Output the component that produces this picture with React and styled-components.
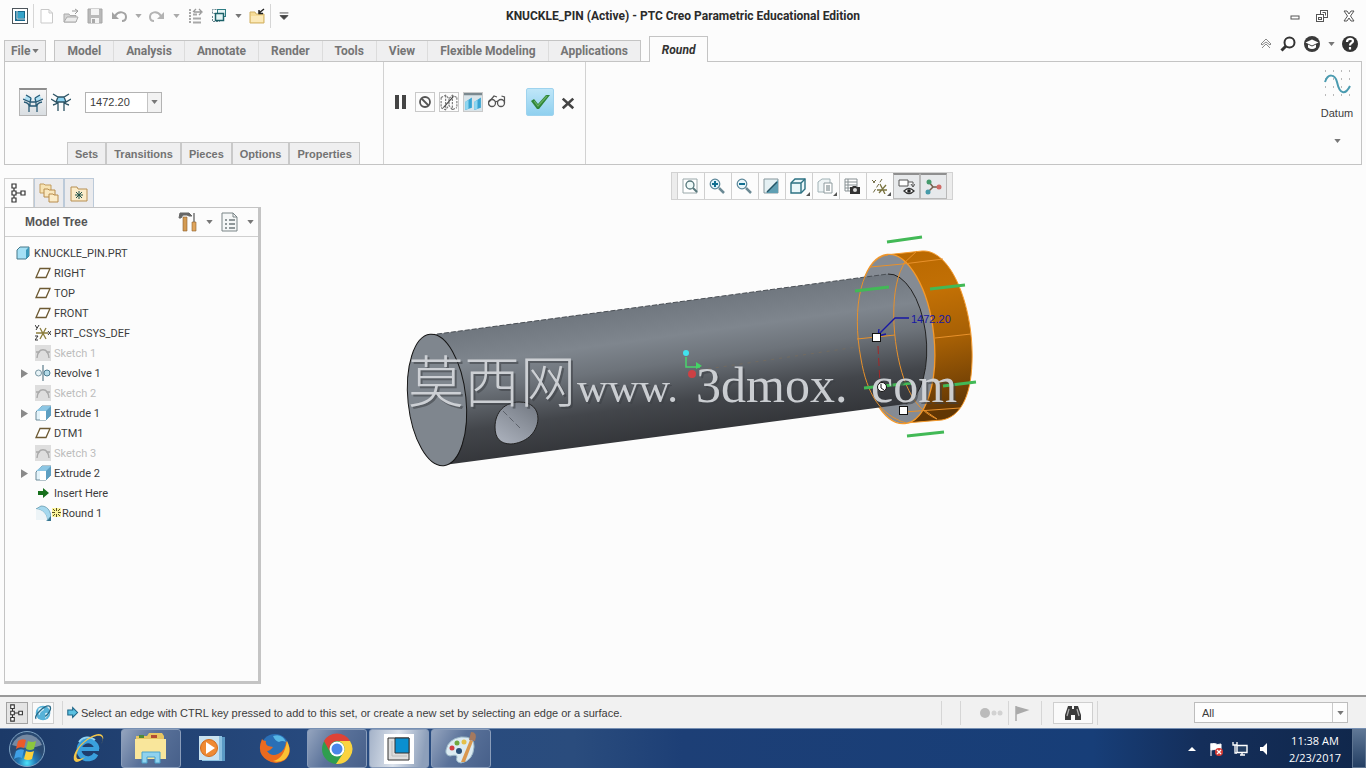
import React from 'react';
import styled, { createGlobalStyle } from 'styled-components';

const GlobalStyle = createGlobalStyle`
  * {
    box-sizing: border-box;
  }
  body {
    margin: 0;
    background: #fcfcfc;
    color: #3c3c3c;
    font-family: "Liberation Sans", Arial, sans-serif;
    font-size: 11px;
  }
  button, input, select {
    font: inherit;
    color: inherit;
    margin: 0;
    padding: 0;
  }
  svg {
    display: block;
    flex: none;
  }
`;

/* ---------- icons ---------- */

const art = {
  app: (
    <>
      <rect x="0.5" y="0.5" width="15" height="15" fill="#fff" stroke="#4d565c" />
      <rect x="3" y="3" width="10" height="10" fill="#17688c" />
      <path d="M5 3v8h8" fill="none" stroke="#cfe3ea" />
      <rect x="6" y="4" width="6" height="6" fill="#35a3c9" />
    </>
  ),
  file: <path d="M2 1.500h8l3.500 3.500v10h-11.500zM10 1.500v3.500h3.500" fill="#fff" stroke="#c9c9c9" />,
  open: (
    <>
      <path d="M1 14V6h5l1 1.500h6V14z" fill="#d5d5d5" stroke="#ababab" />
      <path d="M1 14l3-5h11l-2 5z" fill="#ececec" stroke="#ababab" />
      <path d="M9 3h5M12 1l3 2-3 3" fill="none" stroke="#999" />
    </>
  ),
  save: (
    <>
      <path d="M1 1h14v14H1z" fill="#b9b9b9" stroke="#a6a6a6" />
      <path d="M4 1h8v6H4zM4 10h8v5H4z" fill="#f3f3f3" />
      <path d="M5 11h3v4H5z" fill="#a9a9a9" />
    </>
  ),
  undo: (
    <>
      <path d="M4 8c4-6 11-4 11 1 0 3-2 4-4 4" fill="none" stroke="#a3a3a3" strokeWidth="2" />
      <path d="M1 4v7h7z" fill="#a3a3a3" />
    </>
  ),
  redo: (
    <>
      <path d="M12 8C8 2 1 4 1 9c0 3 2 4 4 4" fill="none" stroke="#b3b3b3" strokeWidth="2" />
      <path d="M15 4v7H8z" fill="#b3b3b3" />
    </>
  ),
  regen: (
    <>
      <path d="M3 1v14" stroke="#a8a8a8" strokeWidth="2" strokeDasharray="2 1" />
      <path d="M6 6.500h4M6 10.500h8M6 14.500h8" stroke="#a8a8a8" strokeWidth="2" />
      <path d="M7 4h7M9 1L6 4M12 1l3 3-3 3" fill="none" stroke="#9a9a9a" strokeWidth="1.300" />
    </>
  ),
  windows: (
    <>
      <path d="M5.500 1.500h-4v4h3M1.500 8v5.500h7v-1" fill="none" stroke="#6b8790" strokeDasharray="2 1" />
      <rect x="6.500" y="1.500" width="8" height="7" fill="#e6f4f4" stroke="#2e7d84" />
      <rect x="4.500" y="5.500" width="8" height="7" fill="#e3f5f5" stroke="#1b6168" strokeWidth="1.500" />
    </>
  ),
  closeFolder: (
    <>
      <path d="M1 4h5l1 2h8v9H1z" fill="#f6dc98" stroke="#d0b064" />
      <path d="M2 8h12v6H2z" fill="#fbe9b8" />
      <path d="M15 1l-5 4M10 2v3.500h4" fill="none" stroke="#222" strokeWidth="1.500" />
    </>
  ),
  customize: <path d="M3 4.500h10M3.500 7.500h9L8 12z" fill="#444" stroke="#444" />,
  minimize: <rect x="4" y="8" width="8" height="3" fill="#fff" stroke="#555" />,
  restore: (
    <>
      <rect x="6.500" y="2.500" width="7" height="7" fill="#fff" stroke="#555" />
      <rect x="2.500" y="6.500" width="7" height="7" fill="#fff" stroke="#555" />
      <rect x="4.500" y="9.500" width="3" height="2" fill="#fff" stroke="#555" />
      <path d="M8.500 4.500h3v3" fill="none" stroke="#555" />
    </>
  ),
  close: (
    <path d="M3 3h3l2 3 2-3h3L9.500 8 13 13h-3l-2-3-2 3H3l3.500-5z" fill="#fff" stroke="#555" />
  ),
  collapse: <path d="M3 8l5-5 5 5-1 1-4-3-4 3zM4 12l4-4 4 4" fill="#fff" stroke="#8a8a8a" />,
  search: (
    <>
      <circle cx="9.500" cy="6.500" r="5" fill="#fff" stroke="#333" strokeWidth="2" />
      <path d="M6 10l-4.500 4.500" stroke="#333" strokeWidth="3" />
    </>
  ),
  learn: (
    <>
      <circle cx="8" cy="8" r="8" fill="#3a3a3a" />
      <path d="M1.500 6.500L8 3.500l6.500 3L8 9.500zM4 8.500v3q4 3 8 0v-3L8 10.500z" fill="#fff" />
    </>
  ),
  help: (
    <>
      <circle cx="8" cy="8" r="8" fill="#333" />
      <path d="M5 6c0-4 6-4 6-1 0 2-3 2-3 4.500M8 11v2.500" fill="none" stroke="#fff" strokeWidth="2.200" />
    </>
  ),
  roundSet: (
    <>
      <path d="M1 6l3-4 5 3-1 4zM19 6l-3-4-5 3 1 4z" fill="#aee0f4" />
      <path d="M3 2l5 3M17 2l-5 3M0 6l7 3h6l7-3M1 9q5 1 5 4v6M19 9q-5 1-5 4v6M6 13h8M8 5l-1 4v4M12 5l1 4v4" fill="none" stroke="#285a75" strokeWidth="1.300" />
    </>
  ),
  roundTrans: (
    <>
      <path d="M7 5h6l2 5H5z" fill="#8dd4f2" />
      <path d="M2 2l5 3h6l5-3M0 7l5 3h10l5-3M2 13q4-1 5-3M18 13q-4-1-5-3M7 5l-2 5M13 5l2 5M7 10v9M13 10v9" fill="none" stroke="#2c5364" strokeWidth="1.300" />
    </>
  ),
  pause: <path d="M2 1h4v14H2zM9 1h4v14H9z" fill="#444" />,
  none: (
    <>
      <circle cx="8" cy="8" r="5" fill="none" stroke="#555" strokeWidth="1.800" />
      <path d="M4.500 4.500l7 7" stroke="#555" strokeWidth="1.800" />
    </>
  ),
  unattached: (
    <>
      <path d="M1 4l4-2 3 3 3-3 4 2M1 13l4 2 3-4 3 4 4-2M1 4v9M8 5v6M15 4v9M5 2v13M11 2v13" fill="none" stroke="#777" strokeDasharray="2 1" />
      <path d="M3 13L12 3" stroke="#444" />
    </>
  ),
  attached: (
    <>
      <path d="M0 0h16v16H0z" fill="#d9e4e9" />
      <path d="M1 8l6-4v9l-6 2zM9 8l6-4v9l-6 2z" fill="#38a4d2" />
      <path d="M1 8l3-2v8l-3 1zM9 8l3-2v8l-3 1z" fill="#8fd6f0" />
      <path d="M0 0h16v2H0z" fill="#7b898f" />
    </>
  ),
  glasses: (
    <>
      <ellipse cx="4" cy="10" rx="3.500" ry="3.500" fill="none" stroke="#555" strokeWidth="1.300" />
      <ellipse cx="13" cy="10" rx="3.500" ry="3.500" fill="none" stroke="#555" strokeWidth="1.300" />
      <path d="M1 9l5-6 3 1M16.500 10V4l-3-1M7 9l3-1" fill="none" stroke="#555" strokeWidth="1.200" />
    </>
  ),
  check: (
    <>
      <path d="M1 9l3-2 4 5 8-9h4L9 17H7z" fill="#2e8539" />
      <path d="M4 9l4 5 9-10" fill="none" stroke="#66ae62" strokeWidth="1.200" />
    </>
  ),
  cancel: <path d="M2 3l12 11M14 3L2 14" stroke="#444" strokeWidth="3" />,
  datum: (
    <>
      <path d="M3 2h1M11 2h1M19 2h1M27 2h1M3 10h1M11 10h1M19 10h1M27 10h1M3 18h1M11 18h1M19 18h1M27 18h1M3 26h1M11 26h1M19 26h1M27 26h1" stroke="#777" />
      <path d="M3 13C6 4 13 5 15 13C18 27 24 25 28 17" fill="none" stroke="#4a9bb0" strokeWidth="2" />
    </>
  ),
  tree: (
    <path d="M3 1h4v4H3zM3 8h4v4H3zM3 15h4v4H3zM12 8h4v4h-4zM5 5v3M5 12v3M7 10h5" fill="#fff" stroke="#333" strokeWidth="1.200" />
  ),
  folders: (
    <>
      <path d="M1 1h4l1 1h6v8H1z" fill="#f7e3b3" stroke="#c39d5e" />
      <path d="M5 6h4l1 1h6v7H5z" fill="#f9e8c0" stroke="#b88c4c" />
      <path d="M10 11h4l1 1h4v7h-9z" fill="#fbecc9" stroke="#b88c4c" />
    </>
  ),
  favorites: (
    <>
      <path d="M1 3h6l1 2h9v12H1z" fill="#fbecca" stroke="#b78f52" />
      <path d="M9 7v8M5 11h8M6 8l6 6M12 8l-6 6" stroke="#21534a" />
    </>
  ),
  settings: (
    <>
      <path d="M2 1h9l3 3h-3L9 3H5L3 6H1z" fill="#666" stroke="#666" />
      <path d="M5 5h4v14H5z" fill="#d49b52" stroke="#8a5f2c" strokeWidth="0.600" />
      <path d="M16 1v10" stroke="#777" strokeWidth="1.500" />
      <path d="M14 10h4v9h-4z" fill="#e0a55c" stroke="#8a5f2c" strokeWidth="0.600" />
    </>
  ),
  show: (
    <>
      <path d="M2 1h11l4 4v14H2z" fill="#f5f7f7" stroke="#7b8587" />
      <path d="M13 1v4h4" fill="none" stroke="#7b8587" />
      <path d="M5 8h2M5 12h2M5 16h2M9 8h6M9 12h6M9 16h6" stroke="#6f7a7c" strokeWidth="1.400" />
    </>
  ),
  part: (
    <>
      <path d="M2 5l3-3h9v9l-3 3H2z" fill="#a5e0f5" stroke="#46798a" strokeLinejoin="round" />
      <path d="M11 5l3-3v9l-3 3z" fill="#3d9abb" />
    </>
  ),
  plane: <path d="M5 3.500h10l-4 9H1z" fill="#fff" stroke="#6d5a33" strokeWidth="1.300" />,
  csys: (
    <>
      <path d="M1 8h12M5 3l6 11M11 3L5 14" stroke="#8a7c3c" strokeWidth="1.300" />
      <path d="M0 0l2 3M4 0L1 5M0 11h3l-3 4h3M13 6l3 4M16 6l-3 4" fill="none" stroke="#333" />
    </>
  ),
  sketch: (
    <>
      <path d="M0 0h16v16H0z" fill="#dedede" />
      <path d="M2 13c1-11 11-11 12 0M1 7h4M11 7h4" fill="none" stroke="#aaa" strokeWidth="1.400" />
    </>
  ),
  revolve: (
    <>
      <circle cx="3.500" cy="8" r="3" fill="#e7f3f7" stroke="#7896a2" />
      <circle cx="12" cy="8" r="3" fill="#b4dbe9" stroke="#4c7c90" />
      <path d="M8 0v16" stroke="#3b6374" />
    </>
  ),
  extrude: (
    <>
      <path d="M1 7l6-6h9v9l-5 5H1z" fill="#e3f3fa" stroke="#6b8998" />
      <path d="M7 1h9v9l-5 5V6H1z" fill="#8cc6e4" />
      <path d="M5 6h6v9H5z" fill="#fff" />
      <path d="M11 6l5-5v9l-5 5z" fill="#5e9fc2" />
    </>
  ),
  insert: <path d="M3 6h5V3l6 5-6 5v-3H3z" fill="#17701c" />,
  round: (
    <>
      <path d="M1 4l5-3c6 0 9 4 10 10l-4 5C12 9 8 5 1 4z" fill="#a5d8ee" stroke="#6699ad" strokeWidth="0.800" />
      <path d="M1 4v11h11C12 9 8 5 1 4z" fill="#edf4f7" />
      <path d="M12 16l4-5v5z" fill="#34748f" />
    </>
  ),
  refit: (
    <>
      <path d="M1 1h14v14H1z" fill="#fff" stroke="#9aa8aa" />
      <circle cx="8" cy="7" r="4" fill="#eef9f8" stroke="#56777b" strokeWidth="1.300" />
      <path d="M11 10l4 4" stroke="#56777b" strokeWidth="2" />
    </>
  ),
  zoomIn: (
    <>
      <circle cx="6" cy="6" r="4.800" fill="#e0f4fb" stroke="#5b8698" strokeWidth="1.200" />
      <path d="M3 6h6M6 3v6" stroke="#116f91" strokeWidth="2" />
      <path d="M10 10l5 5" stroke="#6a8994" strokeWidth="2.500" />
    </>
  ),
  zoomOut: (
    <>
      <circle cx="6" cy="6" r="4.800" fill="#e9f6fa" stroke="#5b8698" strokeWidth="1.200" />
      <path d="M3 6h6" stroke="#116f91" strokeWidth="2" />
      <path d="M10 10l5 5" stroke="#6a8994" strokeWidth="2.500" />
    </>
  ),
  repaint: (
    <>
      <path d="M1 1h14v14H1z" fill="#e4f0f3" stroke="#86979d" />
      <path d="M15 2v13H3z" fill="#5f9fb3" />
      <path d="M4 14l10-10" stroke="#245465" strokeWidth="1.500" />
    </>
  ),
  display: (
    <>
      <path d="M1 5l4-4h10v10l-4 4H1z" fill="#eaf7fa" stroke="#2c7182" strokeWidth="1.400" />
      <path d="M1 5h10v10M11 5l4-4" fill="none" stroke="#2c7182" strokeWidth="1.400" />
    </>
  ),
  views: (
    <>
      <path d="M1 4l4-3h8v9l-3 4H1z" fill="#eef4f5" stroke="#a1b2b6" />
      <path d="M7 5h8v10H7z" fill="#fff" stroke="#8e9b9e" />
      <path d="M9 8h4M9 10h4M9 12h4" stroke="#67787c" />
    </>
  ),
  viewManager: (
    <>
      <path d="M1 1h12v12H1zM4 1v12M1 4h12M1 7h12M1 10h12" fill="#fff" stroke="#879093" />
      <path d="M6 9h2l1-1h3l1 1h3v7H6z" fill="#333" />
      <circle cx="11" cy="12" r="2" fill="#ddd" />
    </>
  ),
  datums: (
    <>
      <path d="M1 2l4 4M5 2L1 6M11 1L2 15" fill="none" stroke="#6e6840" strokeDasharray="4 2" />
      <path d="M6 12h10M9 6l5 10M15 7L8 15" stroke="#79733f" strokeWidth="1.300" />
    </>
  ),
  annotations: (
    <>
      <path d="M1 1h9v6H1zM10 3h5v4M13 5l2 3 2-3" fill="#fff" stroke="#555" />
      <path d="M6 12q5-5 10 0q-5 5-10 0z" fill="#fff" stroke="#333" strokeWidth="1.300" />
      <circle cx="11" cy="12" r="1.800" fill="#222" />
    </>
  ),
  spin: (
    <>
      <path d="M4 3l4 5-5 5M8 8h6" fill="none" stroke="#76604e" strokeWidth="1.500" />
      <circle cx="4" cy="3" r="2.500" fill="#459a6c" />
      <circle cx="3" cy="13" r="2.500" fill="#479baa" />
      <circle cx="14" cy="8" r="2.500" fill="#cf6b66" />
    </>
  ),
  globe: (
    <>
      <circle cx="8" cy="8" r="6.500" fill="#57b2d8" />
      <path d="M4 4q4-2 5 1q-4 2-4 5q-2-1-1-6M10 8q3-1 3 1l-3 4z" fill="#d7f0f8" />
      <path d="M2 13C-1 11 10 0 14 2c2 2-1 7-4 9" fill="none" stroke="#286a88" strokeWidth="1.200" />
    </>
  ),
  message: <path d="M1 5h6V2l6 6-6 6v-3H1z" fill="#5bc1e1" stroke="#1c6487" strokeWidth="1.300" />,
  flag: <path d="M2 1v15M2 2l11 3-11 4z" fill="#aaa" stroke="#aaa" strokeWidth="1.500" />,
  binoculars: (
    <>
      <path d="M3 1h4v3h2V1h4l3 9v5h-6v-5H6v5H0v-5z" fill="#3b3b3b" />
      <path d="M4 4l-2 7M12 4l2 7" stroke="#aaa" strokeWidth="1.300" />
    </>
  ),
  status: (
    <>
      <circle cx="6" cy="8" r="5" fill="#bbb" />
      <circle cx="15" cy="8" r="2.500" fill="#d2d2d2" />
      <circle cx="21" cy="8" r="2.500" fill="#d2d2d2" />
    </>
  ),
  start: (
    <>
      <defs>
        <radialGradient id="orb" cx="0.5" cy="0.9">
          <stop offset="0" stopColor="#4de3fb" />
          <stop offset="0.5" stopColor="#2379b5" />
          <stop offset="1" stopColor="#2a4a72" />
        </radialGradient>
      </defs>
      <circle cx="18" cy="18" r="17.500" fill="url(#orb)" stroke="#7fa3c4" />
      <path d="M3 14a16 16 0 0 1 30 0q-14 6-30 0z" fill="#fff" opacity="0.350" />
      <path d="M9 10q4-3 8-1l-2 8q-4-2-8 1z" fill="#ec5a2a" />
      <path d="M19 10q4 2 8 0l-2 8q-4 2-8 0z" fill="#8cc63e" />
      <path d="M7 20q4-3 8-1l-2 8q-4-2-8 1z" fill="#3fa0e6" />
      <path d="M17 20q4 2 8 0l-2 8q-4 2-8 0z" fill="#fdd13a" />
    </>
  ),
  ie: (
    <>
      <path d="M26 18A9 9 0 1 0 25 23" fill="none" stroke="#3aa0dd" strokeWidth="5" />
      <path d="M10 18h18" stroke="#3aa0dd" strokeWidth="4" />
      <path d="M8 11A11 11 0 0 1 24 9" fill="none" stroke="#8fd4f5" strokeWidth="2" />
      <path d="M31 4c-7-6-31 14-28 25 2 4 7 1 11-3-7 4-10 2-8-4C9 12 26 1 31 6q2 3-1 7 4-6 1-9z" fill="#f2c64a" />
    </>
  ),
  explorer: (
    <>
      <path d="M3 5h11l2-3h13l2 3v20H3z" fill="#e8c662" />
      <path d="M6 4h5v3H6z" fill="#4d8a3b" />
      <path d="M18 4h6v3h-6z" fill="#b34d34" />
      <path d="M2 8h31v20H2z" fill="#f9e69b" />
      <path d="M9 21h18v11h-5v-6h-8v6H9z" fill="#8fd2ee" stroke="#4ba3cc" />
    </>
  ),
  media: (
    <>
      <path d="M10 6h20v24H10z" fill="#5b9ac5" />
      <path d="M7 5h20v25H7z" fill="#8bc0e0" />
      <path d="M4 5h20v24H4z" fill="#c9e2f0" />
      <circle cx="14" cy="17" r="8.500" fill="#ef8a33" stroke="#d26b1c" />
      <path d="M11 11l9 6-9 6z" fill="#fff" />
    </>
  ),
  firefox: (
    <>
      <circle cx="18" cy="17" r="14" fill="#2a6fb6" />
      <path d="M16 5q9-3 13 6-4-2-7 0-4-1-6-6z" fill="#57b7e5" />
      <path d="M5 8q1 2 4 2-1 3 2 5l5 1q-3 4-6 4 4 6 11 3 8-4 8-13 8 10-1 19-9 6-18 0Q-1 22 5 8z" fill="#ea6a1f" />
      <path d="M30 10q6 12-3 19-6 3-11 1 11-2 14-20z" fill="#fbc235" />
    </>
  ),
  chrome: (
    <>
      <circle cx="18" cy="18" r="15" fill="#2f9e4f" />
      <path d="M5 10A15 15 0 0 1 31 10H18a8 8 0 0 0-7 11z" fill="#de4336" />
      <path d="M31 10a15 15 0 0 1-14 23l8-12a8 8 0 0 0-7-11z" fill="#fbd33f" />
      <circle cx="18" cy="18" r="7.500" fill="#fff" />
      <circle cx="18" cy="18" r="5.500" fill="#4a86e8" />
    </>
  ),
  creo: (
    <>
      <path d="M3 3h30v30H3z" fill="#fff" />
      <path d="M7 7h21v22H7z" fill="#ddd" stroke="#333" />
      <path d="M14 7h14v15H14z" fill="#0a8fd0" stroke="#333" />
      <path d="M11 10v15h15" fill="none" stroke="#bbb" />
    </>
  ),
  paint: (
    <>
      <path d="M18 6q14-1 13 10-1 14-13 16-6-1-4-6 0-3-7-1-5-1-4-6Q5 8 18 6z" fill="#dcebf2" stroke="#9db9c8" />
      <circle cx="9" cy="17" r="2.500" fill="#d43f44" />
      <circle cx="14" cy="12" r="2.500" fill="#73a83e" />
      <circle cx="21" cy="11" r="2.500" fill="#e5c049" />
      <circle cx="16" cy="20" r="3" fill="#294f78" />
      <path d="M18 31l9-22 3 1-8 21z" fill="#d9974e" />
      <path d="M26 9l2-8q7 0 4 9z" fill="#a5795f" />
    </>
  ),
  trayUp: <path d="M4 10l4-4 4 4z" fill="#fff" />,
  trayFlag: (
    <>
      <path d="M3 2v13M3 3q4-1 5 0t5 0v6q-4 1-5 0t-5 0z" fill="#fff" stroke="#fff" />
      <circle cx="11" cy="11" r="4" fill="#d53a34" />
      <path d="M9 9l4 4M13 9l-4 4" stroke="#fff" strokeWidth="1.300" />
    </>
  ),
  network: (
    <>
      <path d="M5 4.500h10v7H5zM8 14h5M10 12v2" fill="#243f63" stroke="#fff" strokeWidth="1.400" />
      <path d="M1 1v3h4V1M3 4v8h2" fill="none" stroke="#fff" strokeWidth="1.300" />
    </>
  ),
  volume: <path d="M4 6h3l4-4v12l-4-4H4z" fill="#fff" />,
};

function Icon({ name, size = 16, width = size, box = size, boxWidth = box }) {
  return (
    <svg width={width} height={size} viewBox={`0 0 ${boxWidth} ${box}`} aria-hidden="true">
      {art[name]}
    </svg>
  );
}

function Arrow({ color = '#777' }) {
  return (
    <svg width="7" height="4" viewBox="0 0 8 5" aria-hidden="true">
      <path d="M0 0h8L4 5z" fill={color} />
    </svg>
  );
}

/* ---------- window frame ---------- */

const Window = styled.div`
  display: flex;
  flex-direction: column;
  min-height: 100vh;
`;

const TitleBar = styled.header`
  display: grid;
  grid-template-columns: 1fr auto 1fr;
  align-items: center;
  height: 32px;
`;

const QuickAccess = styled.div`
  display: flex;
  align-items: center;
  padding-left: 8px;
`;

const PlainButton = styled.button`
  display: flex;
  align-items: center;
  justify-content: center;
  width: ${(p) => p.$w || 24}px;
  height: ${(p) => p.$h || 24}px;
  border: 0;
  background: transparent;
`;

const Divider = styled.span`
  width: 1px;
  height: ${(p) => p.$h || 24}px;
  margin: 0 ${(p) => p.$gap || 0}px;
  background: #d6d6d6;
`;

const Title = styled.h1`
  margin: 0;
  font-family: Roboto, "Liberation Sans", sans-serif;
  font-size: 12px;
  line-height: 16px;
  font-weight: 700;
  color: #2b2b2b;
`;

const WindowControls = styled.div`
  display: flex;
  justify-content: flex-end;
  gap: 3px;
  padding-right: 5px;
`;

const TabRow = styled.nav`
  display: flex;
  align-items: flex-end;
  height: 29px;
  padding-left: 4px;
`;

const TabGroup = styled.div`
  display: flex;
  margin: 0 8px;
  border: 1px solid #c4c4c4;
  border-bottom: 0;
`;

const Tab = styled.button`
  display: flex;
  align-items: center;
  gap: 2px;
  height: 20px;
  padding: 0 12px;
  border: 0;
  border-right: 1px solid #dcdcdc;
  background: #efeff0;
  color: #757575;
  font-family: Roboto, "Liberation Sans", sans-serif;
  font-size: 12px;
  font-weight: 700;
  &:last-child {
    border-right: 0;
  }
`;

const FileTab = styled(Tab)`
  height: 21px;
  padding: 0 6px;
  border: 1px solid #c4c4c4 !important;
  border-bottom: 0 !important;
`;

const ActiveTab = styled(Tab)`
  position: relative;
  height: 26px;
  margin-bottom: -1px;
  border: 1px solid #c4c4c4 !important;
  border-bottom: 0 !important;
  background: #fcfcfc;
  color: #333;
  font-style: italic;
`;

const HelpTools = styled.div`
  display: flex;
  align-items: center;
  align-self: flex-start;
  margin-left: auto;
  padding-right: 4px;
`;

/* ---------- ribbon ---------- */

const Ribbon = styled.section`
  display: flex;
  height: 104px;
  margin: 0 4px;
  border: 1px solid #c4c4c4;
`;

const Dashboard = styled.div`
  display: flex;
  flex-direction: column;
  justify-content: space-between;
  width: 379px;
  padding: 26px 0 0 14px;
  border-right: 1px solid #d2d2d2;
`;

const Row = styled.div`
  display: flex;
  align-items: center;
`;

const ToolButton = styled(PlainButton)`
  width: 28px;
  height: 28px;
  border: ${(p) => (p.$on ? '1px solid #b5b5b5' : '0')};
  border-top: ${(p) => (p.$on ? '2px solid #8e8e8e' : '0')};
  background: ${(p) => (p.$on ? 'linear-gradient(#f7f7f7, #d9dee2)' : 'transparent')};
`;

const RadiusBox = styled.div`
  display: flex;
  height: 21px;
  margin-left: 10px;
  border: 1px solid #b3b3b3;
`;

const RadiusInput = styled.input`
  width: 61px;
  padding-left: 4px;
  border: 0;
  background: #fff;
`;

const RadiusArrow = styled(PlainButton)`
  width: 14px;
  height: 19px;
  border-left: 1px solid #c4c4c4;
  background: #f2f2f2;
`;

const PanelTabs = styled.div`
  display: flex;
  padding-left: 48px;
`;

const PanelTab = styled.button`
  height: 22px;
  padding: 0 7px;
  border: 1px solid #c9c9c9;
  border-bottom: 0;
  background: #efeff0;
  color: #737373;
  font-weight: 700;
`;

const Controls = styled.div`
  display: flex;
  align-items: flex-start;
  width: 202px;
  padding: 26px 0 0 7px;
  border-right: 1px solid #d2d2d2;
`;

const PreviewButton = styled(PlainButton)`
  width: 20px;
  height: 20px;
  margin: 4px 4px 0 0;
  border: 1px solid ${(p) => (p.$framed ? '#c9c9c9' : 'transparent')};
`;

const OkButton = styled(PlainButton)`
  width: 28px;
  height: 28px;
  margin-left: 15px;
  border: 1px solid #9ed3ee;
  border-radius: 2px;
  background: linear-gradient(#bfe6f8, #8fd0ef);
`;

const DatumButton = styled.button`
  display: flex;
  flex-direction: column;
  align-items: center;
  align-self: flex-start;
  width: 48px;
  margin-left: auto;
  padding-top: 7px;
  border: 0;
  background: transparent;
  line-height: 14px;
`;

const DatumLabel = styled.span`
  margin: 9px 0 19px;
`;

/* ---------- work area ---------- */

const Work = styled.main`
  display: flex;
  flex: 1;
  min-height: 0;
`;

const Sidebar = styled.aside`
  display: flex;
  flex-direction: column;
  width: 261px;
  padding: 13px 0 11px 4px;
`;

const SideTabs = styled.div`
  display: flex;
`;

const SideTab = styled.button`
  display: flex;
  align-items: center;
  justify-content: center;
  width: 30px;
  height: 29px;
  border: 1px solid ${(p) => (p.$active ? '#d2d2d2' : '#bccad9')};
  border-bottom: 0;
  background: ${(p) => (p.$active ? '#fcfcfc' : '#ebebed')};
`;

const TreePanel = styled.div`
  flex: 1;
  border: 1px solid #c4c4c4;
  border-width: 1px 3px 3px 1px;
`;

const TreeHeader = styled.div`
  display: flex;
  align-items: center;
  height: 29px;
  padding-left: 20px;
  border-bottom: 1px solid #cfcfcf;
`;

const TreeTitle = styled.h2`
  flex: 1;
  margin: 0;
  font-size: 12px;
  color: #555;
`;

const TreeList = styled.ul`
  margin: 0;
  padding: 6px 0 0;
  list-style: none;
`;

const TreeItem = styled.li`
  display: flex;
  align-items: center;
  gap: ${(p) => (p.$tight ? 1 : 3)}px;
  height: 20px;
  padding-left: ${(p) => (p.$root ? 10 : 30)}px;
  color: ${(p) => (p.$dim ? '#bcbcbc' : '#3c3c3c')};
  font-family: Roboto, "Liberation Sans", sans-serif;
`;

const Expander = styled.button`
  width: 20px;
  height: 20px;
  margin-left: -20px;
  margin-right: -3px;
  padding-left: 6px;
  border: 0;
  background: transparent;
`;

const Viewport = styled.section`
  display: flex;
  flex: 1;
  flex-direction: column;
  align-items: center;
  min-width: 0;
  padding-top: 7px;
`;

const ViewTools = styled.div`
  display: flex;
  height: 28px;
  margin-right: 4px;
  padding: 0 5px;
  border: 1px solid #d2d2d2;
  background: #ececec;
`;

const ViewTool = styled.button`
  display: flex;
  align-items: center;
  justify-content: center;
  width: 27px;
  height: 26px;
  border: 0;
  border-left: 1px solid #cfcfcf;
  background: #fcfcfc;
  ${(p) => p.$on && 'border: 1px solid #b9b9b9; border-top: 2px solid #8f8f8f; background: #e7e9eb;'}
`;

const Corner = styled.span`
  align-self: flex-end;
  margin: 0 -2px 3px -1px;
  border: 2px solid transparent;
  border-right-color: #555;
  border-bottom-color: #555;
`;

const Canvas = styled.svg`
  flex: 1 1 0;
  width: 100%;
  min-height: 0;
`;

const Watermark = styled.g`
  fill: #d2d5d9;
  font-family: "Liberation Serif", "Noto Sans CJK SC", serif;
  font-weight: 300;
  opacity: 0.95;
  filter: drop-shadow(2px 2px 0 rgba(60, 64, 69, 0.6));
`;

/* ---------- status bar ---------- */

const StatusBar = styled.footer`
  display: flex;
  align-items: center;
  height: 33px;
  padding: 0 18px 0 6px;
  border-top: 2px solid #999;
  background: #f1f1f1;
`;

const StatusButton = styled(PlainButton)`
  width: ${(p) => p.$w || 22}px;
  height: 22px;
  margin-right: 4px;
  border: 1px solid ${(p) => (p.$on ? '#a2a2a2' : '#cfcfcf')};
  background: ${(p) => (p.$on ? '#e4e4e4' : '#fafafa')};
`;

const Message = styled.p`
  flex: 1;
  margin: 0 0 0 1px;
  line-height: 16px;
`;

const Filter = styled.label`
  display: grid;
  align-items: center;
  justify-items: end;
  width: 154px;
  height: 21px;
  margin-left: 96px;
`;

const FilterSelect = styled.select`
  grid-area: 1 / 1;
  appearance: none;
  width: 100%;
  height: 100%;
  padding-left: 7px;
  border: 1px solid #bdbdbd;
  border-radius: 0;
  background: #fdfdfd;
`;

const FilterArrow = styled.span`
  grid-area: 1 / 1;
  display: flex;
  align-items: center;
  justify-content: center;
  width: 15px;
  height: 19px;
  margin-right: 1px;
  border-left: 1px solid #c9c9c9;
  pointer-events: none;
`;

/* ---------- task bar ---------- */

const TaskBar = styled.nav`
  display: flex;
  align-items: center;
  height: 40px;
  border-top: 1px solid #7790b3;
  background: linear-gradient(90deg, #1c3a68, #284b80 25%, #2a4c7d 42%, #1d3f76 50%, #173e78 80%, #142e5a 88%, #10274b);
  color: #fff;
`;

const StartButton = styled(PlainButton)`
  width: 54px;
  height: 39px;
  margin-right: 5px;
`;

const Task = styled.button`
  display: flex;
  align-items: center;
  justify-content: center;
  width: 60px;
  height: 39px;
  margin-right: 2px;
  border: 1px solid ${(p) => (p.$open ? '#8a9dba' : 'transparent')};
  border-radius: 3px;
  background: ${(p) =>
    p.$front
      ? 'linear-gradient(100deg, #a5b3c9, #dce3ec 45%, #8d9fba 90%)'
      : p.$open
        ? 'linear-gradient(120deg, #94a4be, #5a729a 45%, #47608a)'
        : 'transparent'};
`;

const Tray = styled.div`
  display: flex;
  align-items: center;
  gap: 8px;
  margin-left: auto;
`;

const Clock = styled.time`
  width: 58px;
  margin-left: 6px;
  font-family: "Open Sans", "Noto Sans", sans-serif;
  font-size: 11px;
  line-height: 17px;
  text-align: center;
`;

const ShowDesktop = styled.button`
  width: 14px;
  height: 39px;
  border: 1px solid #5f7591;
  background: linear-gradient(#5e7695, #243f63);
`;

const tabs = ['Model', 'Analysis', 'Annotate', 'Render', 'Tools', 'View', 'Flexible Modeling', 'Applications'];
const panels = ['Sets', 'Transitions', 'Pieces', 'Options', 'Properties'];

const features = [
  { label: 'KNUCKLE_PIN.PRT', icon: 'part', root: true },
  { label: 'RIGHT', icon: 'plane' },
  { label: 'TOP', icon: 'plane' },
  { label: 'FRONT', icon: 'plane' },
  { label: 'PRT_CSYS_DEF', icon: 'csys' },
  { label: 'Sketch 1', icon: 'sketch', dim: true },
  { label: 'Revolve 1', icon: 'revolve', children: true },
  { label: 'Sketch 2', icon: 'sketch', dim: true },
  { label: 'Extrude 1', icon: 'extrude', children: true },
  { label: 'DTM1', icon: 'plane' },
  { label: 'Sketch 3', icon: 'sketch', dim: true },
  { label: 'Extrude 2', icon: 'extrude', children: true },
  { label: 'Insert Here', icon: 'insert' },
  { label: 'Round 1', icon: 'round', fresh: true },
];

const viewTools = [
  { icon: 'refit', label: 'Refit' },
  { icon: 'zoomIn', label: 'Zoom in' },
  { icon: 'zoomOut', label: 'Zoom out' },
  { icon: 'repaint', label: 'Repaint' },
  { icon: 'display', label: 'Display style', menu: true },
  { icon: 'views', label: 'Saved orientations', menu: true },
  { icon: 'viewManager', label: 'View manager' },
  { icon: 'datums', label: 'Datum display filters', menu: true },
  { icon: 'annotations', label: 'Annotation display', on: true },
  { icon: 'spin', label: 'Spin center', on: true },
];

const tasks = [
  { icon: 'ie', label: 'Internet Explorer' },
  { icon: 'explorer', label: 'Explorer', open: true },
  { icon: 'media', label: 'Media Player' },
  { icon: 'firefox', label: 'Firefox' },
  { icon: 'chrome', label: 'Chrome', open: true },
  { icon: 'creo', label: 'Creo Parametric', open: true, front: true },
  { icon: 'paint', label: 'Paint', open: true },
];

const watermark = [
  { text: '莫西网', x: 408, size: 56 },
  { text: 'www.', x: 577, size: 43 },
  { text: '3dmox.', x: 696, size: 50 },
  { text: 'com', x: 871, size: 50 },
];

function KnucklePin() {
  return (
    <Canvas viewBox="261 200 1105 495" role="img" aria-label="Knuckle pin model">
      <defs>
        <linearGradient id="shaft" gradientUnits="userSpaceOnUse" x1="660" y1="304" x2="678" y2="435">
          <stop offset="0" stopColor="#70777f" />
          <stop offset="0.250" stopColor="#7f868e" />
          <stop offset="0.450" stopColor="#6d737a" />
          <stop offset="0.750" stopColor="#43464b" />
          <stop offset="1" stopColor="#34363a" />
        </linearGradient>
        <linearGradient id="head" x1="0" y1="0" x2="0.120" y2="1">
          <stop offset="0" stopColor="#b96800" />
          <stop offset="0.300" stopColor="#c27005" />
          <stop offset="0.600" stopColor="#a55f05" />
          <stop offset="1" stopColor="#613604" />
        </linearGradient>
        <linearGradient id="hole" x1="1" y1="0" x2="0.300" y2="1">
          <stop offset="0" stopColor="#70767f" />
          <stop offset="1" stopColor="#a7adb8" />
        </linearGradient>
      </defs>
      <path d="M885 255L922 251C952 249 974 309 972 362C971 399 959 417 942 420L906 423z" fill="url(#head)" stroke="#f59a2c" />
      <ellipse cx="896" cy="339" rx="38" ry="85" transform="rotate(-6 896 339)" fill="#858b93" stroke="#f59a2c" strokeWidth="1.300" />
      <path d="M430 335L888 274A32 66 -6 0 1 906 404L444 465z" fill="url(#shaft)" />
      <path d="M430 335L888 274" stroke="#4b5056" strokeDasharray="5 2" />
      <path d="M888 274A32 66 -6 0 1 906 404" fill="none" stroke="#222" />
      <ellipse cx="437" cy="400" rx="29" ry="66" transform="rotate(-6 437 400)" fill="#7f868e" stroke="#151515" />
      <path d="M495 427C495 412 505 402 519 402C532 402 538 409 538 419C537 434 525 443 511 444C500 444 495 438 495 427z" fill="url(#hole)" stroke="#222" />
      <path d="M503 411l18 18" stroke="#5d626b" strokeDasharray="6 3" />
      <path d="M888 255C862 258 851 307 861 359C867 394 880 415 906 423M906 261C888 285 892 345 904 379C912 401 923 413 937 419M857 339L895 335M935 338L971 334M870 267L903 264L943 259M903 264L917 251M904 412L960 408M924 410l13 9" fill="none" stroke="#e8912b" />
      <path d="M700 370L857 347" stroke="#8b704d" strokeDasharray="3 5" opacity="0.400" />
      <path d="M887 242L922 237M855 291L889 287M930 289L965 285M864 388L912 383M943 386L976 382M907 436L944 432" stroke="#42b956" strokeWidth="3" />
      <path d="M686 357v10h14" fill="none" stroke="#4ad46c" strokeWidth="1.500" />
      <path d="M696 362l6 4-6 3z" fill="#43d564" />
      <circle cx="686" cy="353" r="3" fill="#41e2ee" />
      <circle cx="692" cy="374" r="4" fill="#cd4044" />
      <path d="M878 346l2 38" stroke="#a32828" strokeDasharray="8 4" />
      <path d="M909 318H895L879 334M878 336l1-7M878 336l8-2" fill="none" stroke="#1717a5" strokeWidth="1.300" />
      <text x="911" y="323" fontSize="11" fill="#1717a5">1472.20</text>
      <rect x="872.500" y="333.500" width="8" height="8" fill="#fff" stroke="#111" />
      <rect x="899.500" y="406.500" width="8" height="8" fill="#fff" stroke="#111" />
      <Watermark>
        {watermark.map((w) => (
          <text key={w.x} x={w.x} y={402} fontSize={w.size}>{w.text}</text>
        ))}
      </Watermark>
      <circle cx="882" cy="387" r="4.500" fill="#fff" stroke="#111" />
      <path d="M881 384v4l3 2" fill="none" stroke="#111" />
    </Canvas>
  );
}

function App() {
  return (
    <Window>
      <GlobalStyle />
      <TitleBar>
        <QuickAccess>
          <PlainButton aria-label="Creo"><Icon name="app" /></PlainButton>
          <Divider $gap={1} />
          <PlainButton aria-label="New"><Icon name="file" /></PlainButton>
          <PlainButton aria-label="Open"><Icon name="open" /></PlainButton>
          <PlainButton aria-label="Save"><Icon name="save" /></PlainButton>
          <PlainButton aria-label="Undo"><Icon name="undo" /></PlainButton>
          <PlainButton $w={14} aria-label="Undo list"><Arrow color="#aaa" /></PlainButton>
          <PlainButton aria-label="Redo"><Icon name="redo" /></PlainButton>
          <PlainButton $w={14} aria-label="Redo list"><Arrow color="#aaa" /></PlainButton>
          <PlainButton aria-label="Regenerate"><Icon name="regen" /></PlainButton>
          <PlainButton aria-label="Windows"><Icon name="windows" /></PlainButton>
          <PlainButton $w={14} aria-label="Windows list"><Arrow /></PlainButton>
          <PlainButton aria-label="Close"><Icon name="closeFolder" /></PlainButton>
          <Divider $gap={1} />
          <PlainButton aria-label="Customize"><Icon name="customize" size={14} box={16} /></PlainButton>
        </QuickAccess>
        <Title>KNUCKLE_PIN (Active) - PTC Creo Parametric Educational Edition</Title>
        <WindowControls>
          <PlainButton aria-label="Minimize"><Icon name="minimize" /></PlainButton>
          <PlainButton aria-label="Restore"><Icon name="restore" /></PlainButton>
          <PlainButton aria-label="Close window"><Icon name="close" /></PlainButton>
        </WindowControls>
      </TitleBar>

      <TabRow>
        <FileTab>File <Arrow /></FileTab>
        <TabGroup>
          {tabs.map((tab) => <Tab key={tab}>{tab}</Tab>)}
        </TabGroup>
        <ActiveTab>Round</ActiveTab>
        <HelpTools>
          <PlainButton $w={20} aria-label="Collapse ribbon"><Icon name="collapse" /></PlainButton>
          <PlainButton aria-label="Search"><Icon name="search" /></PlainButton>
          <PlainButton aria-label="Learning"><Icon name="learn" /></PlainButton>
          <PlainButton $w={14} aria-label="Learning list"><Arrow /></PlainButton>
          <PlainButton aria-label="Help"><Icon name="help" /></PlainButton>
        </HelpTools>
      </TabRow>

      <Ribbon>
        <Dashboard>
          <Row>
            <ToolButton $on aria-label="Set mode"><Icon name="roundSet" size={20} /></ToolButton>
            <ToolButton aria-label="Transition mode"><Icon name="roundTrans" size={20} /></ToolButton>
            <RadiusBox>
              <RadiusInput aria-label="Radius" defaultValue="1472.20" />
              <RadiusArrow aria-label="Recent values"><Arrow /></RadiusArrow>
            </RadiusBox>
          </Row>
          <PanelTabs>
            {panels.map((panel) => <PanelTab key={panel}>{panel}</PanelTab>)}
          </PanelTabs>
        </Dashboard>
        <Controls>
          <PreviewButton aria-label="Pause"><Icon name="pause" /></PreviewButton>
          <PreviewButton $framed aria-label="No preview"><Icon name="none" /></PreviewButton>
          <PreviewButton $framed aria-label="Unattached preview"><Icon name="unattached" size={18} box={16} /></PreviewButton>
          <PreviewButton $framed aria-label="Attached preview"><Icon name="attached" size={18} box={16} /></PreviewButton>
          <PreviewButton aria-label="Verify"><Icon name="glasses" size={18} /></PreviewButton>
          <OkButton aria-label="OK"><Icon name="check" size={20} /></OkButton>
          <PlainButton $w={27} $h={30} aria-label="Cancel"><Icon name="cancel" size={14} box={16} /></PlainButton>
        </Controls>
        <DatumButton>
          <Icon name="datum" size={28} width={30} boxWidth={30} />
          <DatumLabel>Datum</DatumLabel>
          <Arrow />
        </DatumButton>
      </Ribbon>

      <Work>
        <Sidebar>
          <SideTabs>
            <SideTab $active aria-label="Model tree"><Icon name="tree" size={20} /></SideTab>
            <SideTab aria-label="Folder browser"><Icon name="folders" size={20} /></SideTab>
            <SideTab aria-label="Favorites"><Icon name="favorites" size={18} /></SideTab>
          </SideTabs>
          <TreePanel>
            <TreeHeader>
              <TreeTitle>Model Tree</TreeTitle>
              <PlainButton aria-label="Settings"><Icon name="settings" size={20} /></PlainButton>
              <PlainButton $w={18} aria-label="Settings list"><Arrow /></PlainButton>
              <PlainButton aria-label="Show"><Icon name="show" size={20} /></PlainButton>
              <PlainButton $w={16} aria-label="Show list"><Arrow /></PlainButton>
            </TreeHeader>
            <TreeList>
              {features.map((f) => (
                <TreeItem key={f.label} $root={f.root} $dim={f.dim} $tight={f.fresh}>
                  {f.children && (
                    <Expander aria-label={`Expand ${f.label}`}>
                      <svg width="7" height="9" viewBox="0 0 8 10"><path d="M0 0l8 5-8 5z" fill="#8a8a8a" /></svg>
                    </Expander>
                  )}
                  <Icon name={f.icon} />
                  {f.fresh && (
                    <svg width="9" height="12" viewBox="0 0 9 12">
                      <path d="M0 1h9v9H0z" fill="#fbf49a" />
                      <path d="M4.500 1v3M4.500 7v3M0 5.500h3M6 5.500h3M1 2l2 2M8 2L6 4M1 9l2-2M8 9L6 7" stroke="#5b5320" />
                    </svg>
                  )}
                  <span>{f.label}</span>
                </TreeItem>
              ))}
            </TreeList>
          </TreePanel>
        </Sidebar>
        <Viewport>
          <ViewTools>
            {viewTools.map((t) => (
              <ViewTool key={t.icon} $on={t.on} aria-label={t.label}>
                <Icon name={t.icon} width={17} boxWidth={17} />
                {t.menu && <Corner />}
              </ViewTool>
            ))}
          </ViewTools>
          <KnucklePin />
        </Viewport>
      </Work>

      <StatusBar>
        <StatusButton $on aria-label="Toggle tree"><Icon name="tree" size={18} box={20} /></StatusButton>
        <StatusButton aria-label="Toggle browser"><Icon name="globe" size={18} box={16} /></StatusButton>
        <Divider $gap={4} />
        <Icon name="message" size={13} box={16} />
        <Message>Select an edge with CTRL key pressed to add to this set, or create a new set by selecting an edge or a surface.</Message>
        <Divider />
        <Divider $gap={18} />
        <Icon name="status" width={24} boxWidth={24} />
        <Divider $gap={5} />
        <Icon name="flag" />
        <Divider $gap={11} />
        <StatusButton $w={40} aria-label="Search tool"><Icon name="binoculars" /></StatusButton>
        <Divider />
        <Filter>
          <FilterSelect aria-label="Selection filter" defaultValue="All">
            <option>All</option>
          </FilterSelect>
          <FilterArrow><Arrow /></FilterArrow>
        </Filter>
      </StatusBar>

      <TaskBar>
        <StartButton aria-label="Start"><Icon name="start" size={36} /></StartButton>
        {tasks.map((t) => (
          <Task key={t.icon} $open={t.open} $front={t.front} aria-label={t.label}>
            <Icon name={t.icon} size={36} />
          </Task>
        ))}
        <Tray>
          <Icon name="trayUp" />
          <Icon name="trayFlag" />
          <Icon name="network" />
          <Icon name="volume" />
          <Clock>11:38 AM<br />2/23/2017</Clock>
          <ShowDesktop aria-label="Show desktop" />
        </Tray>
      </TaskBar>
    </Window>
  );
}

export default App;
